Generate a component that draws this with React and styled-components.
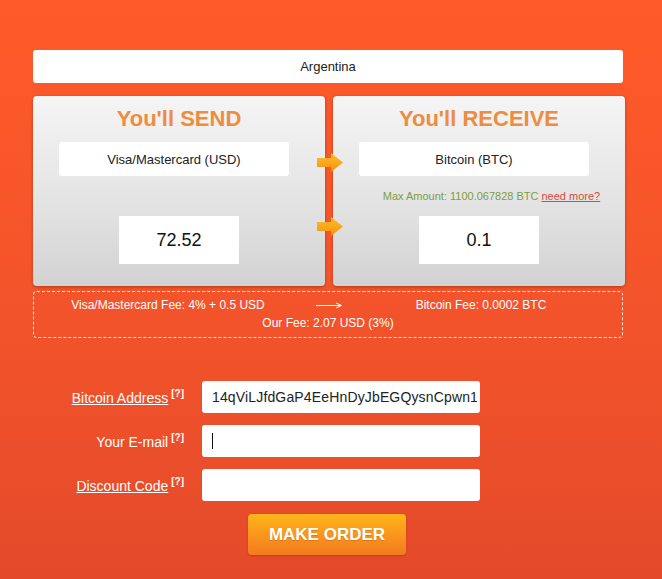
import React from 'react'
import styled, { createGlobalStyle } from 'styled-components'

const GlobalStyle = createGlobalStyle`
    html, body {
        margin: 0;
        padding: 0;
    }
    body {
        font-family: "Liberation Sans", Arial, sans-serif;
        background: linear-gradient(to bottom, #ff5a29 0%, #f4542a 50%, #e44a2a 100%);
        min-height: 579px;
    }
`

const Page = styled.div`
    width: 592px;
    padding: 50px 0 0 33px;
    height: 529px;
    box-sizing: content-box;
`

const Country = styled.div`
    width: 590px;
    height: 33px;
    background: #fff;
    border-radius: 3px;
    display: flex;
    align-items: center;
    justify-content: center;
    font-size: 13px;
    color: #222;
`

const Panels = styled.div`
    position: relative;
    display: grid;
    grid-template-columns: 292px 292px;
    column-gap: 8px;
    margin-top: 13px;
`

const Panel = styled.div`
    height: 190px;
    background: linear-gradient(to bottom, #f5f5f5 0%, #e2e2e2 60%, #d2d2d2 100%);
    border-radius: 4px;
    box-shadow: 0 1px 3px rgba(90, 30, 0, 0.45);
    display: flex;
    flex-direction: column;
    align-items: center;
`

const Title = styled.h2`
    margin: 10px 0 0;
    font-size: 22px;
    line-height: 25px;
    font-weight: bold;
    color: #ee8c3f;
`

const Select = styled.div`
    margin: 11px 10px 0 0;
    width: 230px;
    height: 34px;
    background: #fff;
    border-radius: 3px;
    display: flex;
    align-items: center;
    justify-content: center;
    font-size: 13px;
    color: #222;
`

const Note = styled.div`
    height: 40px;
    display: flex;
    align-items: center;
    font-size: 11px;
    color: #7d9d3c;
    padding-left: 25px;

    a {
        color: #d84a3e;
        margin-left: 3px;
    }
`

const Amount = styled.div`
    width: 120px;
    height: 48px;
    background: #fff;
    display: flex;
    align-items: center;
    justify-content: center;
    font-size: 18px;
    color: #111;
`

const Arrow = styled.svg`
    position: absolute;
    left: 283px;
    top: ${p => p.$top}px;
`

const Fees = styled.div`
    margin-top: 5px;
    width: 588px;
    border: 1px dashed rgba(255, 255, 255, 0.85);
    border-radius: 4px;
    color: #fff;
    font-size: 12px;
    display: flex;
    flex-direction: column;
    align-items: center;
    padding-top: 6px;
    height: 39px;
`

const FeeRow = styled.div`
    display: grid;
    grid-template-columns: 270px 50px 256px;
    width: 590px;
    line-height: 14px;
    text-align: center;
    align-items: center;
`

const FeeArrow = styled.svg`
    justify-self: center;
    margin-left: 2px;
`

const FeeLine = styled.div`
    line-height: 14px;
    margin-top: 4px;
`

const Form = styled.form`
    display: grid;
    grid-template-columns: 151px 278px;
    column-gap: 18px;
    row-gap: 12px;
    margin-top: 43px;
    align-items: center;
`

const Label = styled.label`
    text-align: right;
    color: #fff;
    font-size: 14px;

    span {
        text-decoration: ${p => (p.$link ? 'underline' : 'none')};
    }

    sup {
        font-size: 10px;
        font-weight: bold;
        margin-left: 3px;
    }
`

const Input = styled.input`
    box-sizing: border-box;
    width: 278px;
    height: 32px;
    border: none;
    border-radius: 3px;
    padding: 0 3px 0 10px;
    font-family: "Liberation Sans", Arial, sans-serif;
    font-size: 14px;
    letter-spacing: 0.15px;
    color: #222;
    outline: none;
    background: ${p =>
        p.$caret ? 'linear-gradient(#111, #111) no-repeat 10px 50% / 1px 16px, #fff' : '#fff'};
`

const ButtonRow = styled.div`
    display: flex;
    margin-top: 13px;
    padding-left: 215px;
`

const Button = styled.button`
    width: 158px;
    height: 41px;
    border: none;
    border-radius: 4px;
    background: linear-gradient(to bottom, #ffb619 0%, #fa961c 50%, #f47a20 100%);
    color: #fff;
    font-family: "Liberation Sans", Arial, sans-serif;
    font-weight: bold;
    font-size: 17px;
    text-shadow: 0 1px 1px rgba(150, 60, 0, 0.3);
    box-shadow: 0 1px 2px rgba(120, 30, 0, 0.3);
`

const ArrowIcon = ({ top }) => (
    <Arrow $top={top} width="28" height="19" viewBox="0 0 28 19">
        <defs>
            <linearGradient id={`ag${top}`} x1="0" y1="0" x2="0" y2="1">
                <stop offset="0" stopColor="#ffbf2a" />
                <stop offset="1" stopColor="#f49212" />
            </linearGradient>
        </defs>
        <path d="M1 5 H15 V0 L27 9.5 L15 19 V14 H1 Z" fill={`url(#ag${top})`} />
    </Arrow>
)

export default function App() {
    return (
        <Page>
            <GlobalStyle />
            <Country>Argentina</Country>
            <Panels>
                <Panel>
                    <Title>You'll SEND</Title>
                    <Select>Visa/Mastercard (USD)</Select>
                    <Note />
                    <Amount>72.52</Amount>
                </Panel>
                <Panel>
                    <Title>You'll RECEIVE</Title>
                    <Select>Bitcoin (BTC)</Select>
                    <Note>
                        Max Amount: 1100.067828 BTC <a href="#">need more?</a>
                    </Note>
                    <Amount>0.1</Amount>
                </Panel>
                <ArrowIcon top={57} />
                <ArrowIcon top={121} />
            </Panels>
            <Fees>
                <FeeRow>
                    <div>Visa/Mastercard Fee: 4% + 0.5 USD</div>
                    <FeeArrow width="26" height="7" viewBox="0 0 26 7">
                        <path d="M0 3.5 H24" stroke="#fff" strokeWidth="1" />
                        <path d="M20 1 L25.5 3.5 L20 6" stroke="#fff" strokeWidth="1" fill="none" />
                    </FeeArrow>
                    <div>Bitcoin Fee: 0.0002 BTC</div>
                </FeeRow>
                <FeeLine>Our Fee: 2.07 USD (3%)</FeeLine>
            </Fees>
            <Form>
                <Label $link>
                    <span>Bitcoin Address</span>
                    <sup>[?]</sup>
                </Label>
                <Input defaultValue="14qViLJfdGaP4EeHnDyJbEGQysnCpwn1" />
                <Label>
                    <span>Your E-mail</span>
                    <sup>[?]</sup>
                </Label>
                <Input $caret />
                <Label $link>
                    <span>Discount Code</span>
                    <sup>[?]</sup>
                </Label>
                <Input />
            </Form>
            <ButtonRow>
                <Button type="button">MAKE ORDER</Button>
            </ButtonRow>
        </Page>
    )
}
